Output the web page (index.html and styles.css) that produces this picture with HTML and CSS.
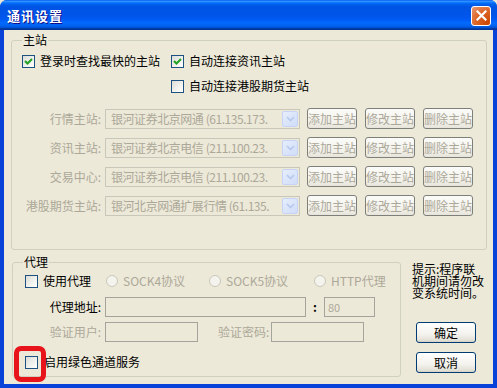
FILE: index.html
```html
<!DOCTYPE html>
<html lang="zh-CN">
  <head>
    <meta charset="UTF-8" />
    <title>通讯设置</title>
    <link rel="stylesheet" href="styles.css">
  </head>
  <body>
    <div class="window">
      <div class="titlebar">
        <span class="title">通讯设置</span>
        <button class="close-btn">
          <svg width="11" height="11" viewBox="0 0 11 11"><path d="M1.5 1.5 L9.5 9.5 M9.5 1.5 L1.5 9.5" stroke="#fff" stroke-width="2.2" stroke-linecap="square"/></svg>
        </button>
      </div>
      <div class="client">
        <fieldset class="group group-main">
          <legend>主站</legend>
          <div class="check-row">
            <label class="check first">
              <span class="box"><svg width="11" height="11" viewBox="0 0 11 11"><path d="M2 5 L4.5 7.5 L9 3" fill="none" stroke="#21a121" stroke-width="2"/></svg></span>
              登录时查找最快的主站
            </label>
            <label class="check">
              <span class="box"><svg width="11" height="11" viewBox="0 0 11 11"><path d="M2 5 L4.5 7.5 L9 3" fill="none" stroke="#21a121" stroke-width="2"/></svg></span>
              自动连接资讯主站
            </label>
          </div>
          <div class="check-row second">
            <label class="check"><span class="box"></span>自动连接港股期货主站</label>
          </div>
          <div class="servers">
            <div class="server-row">
              <span class="field-label">行情主站:</span>
              <div class="combo"><span class="combo-text">银河证券北京网通 (61.135.173.</span><span class="combo-arrow"><svg width="9" height="6" viewBox="0 0 9 6"><path d="M1 1 L4.5 4.5 L8 1" fill="none" stroke="#b7c8ee" stroke-width="1.6"/></svg></span></div>
              <button class="btn" disabled>添加主站</button>
              <button class="btn" disabled>修改主站</button>
              <button class="btn" disabled>删除主站</button>
            </div>
            <div class="server-row">
              <span class="field-label">资讯主站:</span>
              <div class="combo"><span class="combo-text">银河证券北京电信 (211.100.23.</span><span class="combo-arrow"><svg width="9" height="6" viewBox="0 0 9 6"><path d="M1 1 L4.5 4.5 L8 1" fill="none" stroke="#b7c8ee" stroke-width="1.6"/></svg></span></div>
              <button class="btn" disabled>添加主站</button>
              <button class="btn" disabled>修改主站</button>
              <button class="btn" disabled>删除主站</button>
            </div>
            <div class="server-row">
              <span class="field-label">交易中心:</span>
              <div class="combo"><span class="combo-text">银河证券北京电信 (211.100.23.</span><span class="combo-arrow"><svg width="9" height="6" viewBox="0 0 9 6"><path d="M1 1 L4.5 4.5 L8 1" fill="none" stroke="#b7c8ee" stroke-width="1.6"/></svg></span></div>
              <button class="btn" disabled>添加主站</button>
              <button class="btn" disabled>修改主站</button>
              <button class="btn" disabled>删除主站</button>
            </div>
            <div class="server-row">
              <span class="field-label">港股期货主站:</span>
              <div class="combo"><span class="combo-text">银河北京网通扩展行情 (61.135.</span><span class="combo-arrow"><svg width="9" height="6" viewBox="0 0 9 6"><path d="M1 1 L4.5 4.5 L8 1" fill="none" stroke="#b7c8ee" stroke-width="1.6"/></svg></span></div>
              <button class="btn" disabled>添加主站</button>
              <button class="btn" disabled>修改主站</button>
              <button class="btn" disabled>删除主站</button>
            </div>
          </div>
        </fieldset>

        <div class="bottom">
          <fieldset class="group group-proxy">
            <legend>代理</legend>
            <div class="proxy-row first-row">
              <label class="check use-proxy"><span class="box"></span>使用代理</label>
              <label class="radio r1"><span class="dot"></span>SOCK4协议</label>
              <label class="radio r2"><span class="dot"></span>SOCK5协议</label>
              <label class="radio"><span class="dot"></span>HTTP代理</label>
            </div>
            <div class="proxy-row addr-row">
              <span class="field-label dark">代理地址:</span>
              <div class="input addr"></div>
              <span class="port-sep">:</span>
              <div class="input port">80</div>
            </div>
            <div class="proxy-row auth-row">
              <span class="field-label">验证用户:</span>
              <div class="input user"></div>
              <span class="pass-label">验证密码:</span>
              <div class="input pass"></div>
            </div>
            <div class="proxy-row green-row">
              <label class="check"><span class="box"></span>启用绿色通道服务</label>
            </div>
          </fieldset>

          <div class="side">
            <p class="hint">提示:程序联机期间请勿改变系统时间。</p>
            <button class="btn ok">确定</button>
            <button class="btn cancel">取消</button>
          </div>
        </div>
      </div>
      <div class="highlight"></div>
    </div>
  </body>
</html>
```

FILE: styles.css
```css
* {
  margin: 0;
  padding: 0;
  box-sizing: border-box;
}
body {
  width: 497px;
  height: 388px;
  overflow: hidden;
  font-family: "Noto Sans CJK SC", "Noto Sans", sans-serif;
  font-size: 12px;
  color: #000;
  background: #ece9d8;
}
.window {
  position: relative;
  width: 497px;
  height: 388px;
  display: flex;
  flex-direction: column;
  background: #0842d8;
  border-radius: 7px 7px 0 0;
  overflow: hidden;
}
.titlebar {
  height: 30px;
  flex-shrink: 0;
  display: flex;
  align-items: center;
  justify-content: space-between;
  padding: 0 6px 0 7px;
  background: linear-gradient(
    to bottom,
    #0058ee 0%,
    #3593ff 4%,
    #288eff 6%,
    #127dff 8%,
    #036ffc 10%,
    #0262ee 14%,
    #0057e5 20%,
    #0054e3 24%,
    #0055eb 56%,
    #005bf5 66%,
    #026afe 76%,
    #0062ef 86%,
    #0052d6 92%,
    #0040ab 94%,
    #003092 100%
  );
}
.title {
  color: #fff;
  font-weight: 700;
  font-size: 13px;
  line-height: 16px;
  letter-spacing: 1px;
  text-shadow: 1px 1px #0f1089;
  margin-top: 1px;
}
.close-btn {
  width: 20px;
  height: 20px;
  margin-top: 1px;
  border: 1px solid #fff;
  border-radius: 3px;
  background: radial-gradient(circle at 90% 90%, #cc4600 0%, #dc6527 55%, #e89a78 100%);
  display: flex;
  align-items: center;
  justify-content: center;
}
.client {
  flex: 1;
  margin: 0 4px 4px 4px;
  background: #ece9d8;
  padding-top: 3px;
}
.group {
  border: 1px solid #d0d0bf;
  border-radius: 3px;
  min-width: 0;
}
.group legend {
  padding: 0 1px;
  line-height: 14px;
  height: 14px;
  color: #000;
}
.group-main {
  margin: 0 6px 0 7px;
  padding: 4px 10px 29px 10px;
}
.check-row {
  display: flex;
  height: 20px;
  align-items: center;
}
.check-row.second {
  margin-top: 5px;
  padding-left: 149px;
}
.check {
  display: flex;
  align-items: center;
  gap: 5px;
  line-height: 14px;
  white-space: nowrap;
}
.check.first {
  width: 149px;
}
.box {
  width: 13px;
  height: 13px;
  flex-shrink: 0;
  border: 1px solid #1c5180;
  background: linear-gradient(135deg, #dcdcd7 0%, #f6f6f3 70%, #ffffff 100%);
  display: flex;
  align-items: center;
  justify-content: center;
}
.servers {
  margin-top: 8px;
}
.server-row {
  height: 29px;
  display: flex;
  align-items: center;
}
.field-label {
  width: 79px;
  text-align: right;
  color: #aca899;
  white-space: nowrap;
  line-height: 14px;
}
.combo {
  width: 195px;
  height: 20px;
  margin-left: 4px;
  border: 1px solid #c9c7ba;
  display: flex;
  align-items: center;
  padding: 1px;
  overflow: hidden;
}
.combo-text {
  flex: 1;
  white-space: nowrap;
  color: #aca899;
  padding-left: 4px;
  line-height: 14px;
  letter-spacing: -0.45px;
}
.combo-arrow {
  width: 16px;
  height: 16px;
  flex-shrink: 0;
  border: 1px solid #c6d3f7;
  border-radius: 2px;
  background: linear-gradient(135deg, #e6eefc 0%, #d0dcf8 100%);
  display: flex;
  align-items: center;
  justify-content: center;
}
.btn {
  width: 50px;
  height: 21px;
  font-family: inherit;
  font-size: 12px;
  line-height: 14px;
  border: 1px solid #003c74;
  border-radius: 3px;
  background: linear-gradient(to bottom, #ffffff 0%, #f3f2ed 60%, #e3e1d7 90%, #d6d0c5 100%);
  color: #000;
}
.server-row .btn {
  margin-left: 8px;
}
.server-row .combo + .btn {
  margin-left: 7px;
}
.btn:disabled {
  border-color: #7f7f7a;
  color: #aca899;
  background: linear-gradient(to bottom, #fbfbf9 0%, #f2f1ea 70%, #e6e4da 100%);
}
.bottom {
  display: flex;
  margin-top: 5px;
}
.group-proxy {
  width: 389px;
  margin-left: 8px;
  padding: 2px 10px 4px 10px;
}
.proxy-row {
  height: 20px;
  display: flex;
  align-items: center;
}
.first-row {
  padding-left: 2px;
}
.use-proxy {
  width: 81px;
}
.radio {
  display: flex;
  align-items: center;
  gap: 5px;
  color: #aca899;
  line-height: 14px;
  white-space: nowrap;
}
.radio.r1 {
  width: 103px;
}
.radio.r2 {
  width: 105px;
}
.dot {
  width: 12px;
  height: 12px;
  border: 1px solid #cac8bb;
  border-radius: 50%;
  background: #f4f3ee;
}
.addr-row {
  margin-top: 6px;
}
.field-label.dark {
  color: #000;
  width: 78px;
}
.auth-row .field-label {
  width: 78px;
}
.input {
  height: 20px;
  margin-left: 4px;
  border: 1px solid #a5a49c;
  color: #aca899;
  line-height: 18px;
  padding-left: 3px;
  font-size: 11px;
}
.input.addr {
  width: 201px;
}
.port-sep {
  width: 18px;
  text-align: center;
  font-weight: 700;
  line-height: 14px;
}
.input.port {
  width: 51px;
  margin-left: 0;
}
.auth-row {
  margin-top: 5px;
}
.input.user {
  width: 93px;
}
.pass-label {
  margin-left: 20px;
  color: #aca899;
  line-height: 14px;
  white-space: nowrap;
}
.input.pass {
  width: 93px;
  margin-left: 2px;
}
.green-row {
  margin-top: 10px;
  padding-left: 2px;
}
.green-row .check {
  gap: 6px;
}
.side {
  flex: 1;
  display: flex;
  flex-direction: column;
  padding: 8px 0 0 11px;
}
.hint {
  width: 73px;
  line-height: 12px;
  font-size: 12px;
  color: #000;
}
.side .btn {
  width: 60px;
  height: 21px;
  margin-left: 4px;
}
.side .ok {
  margin-top: 23px;
}
.side .cancel {
  margin-top: 9px;
}
.highlight {
  position: absolute;
  left: 14px;
  top: 346px;
  width: 32px;
  height: 36px;
  border: 5px solid #e8141c;
  border-radius: 7px;
}
```
